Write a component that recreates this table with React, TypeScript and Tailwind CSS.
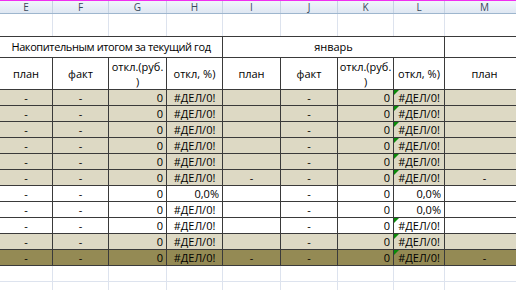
import React from "react";

const COLS = "grid grid-cols-[53px_56px_58px_56px_58px_57px_56px_51px_80px]";
const ERR = "#ДЕЛ/0!";

type Row = {
  bg: string;
  i: string;
  h: string;
  l: string;
  tri: boolean;
  m: string;
};

const TAN = "bg-[#ddd9c4]";
const WHITE = "bg-white";
const OLIVE = "bg-[#948a54]";

const rows: Row[] = [
  { bg: TAN, i: "", h: ERR, l: ERR, tri: true, m: "" },
  { bg: TAN, i: "", h: ERR, l: ERR, tri: true, m: "" },
  { bg: TAN, i: "", h: ERR, l: ERR, tri: true, m: "" },
  { bg: TAN, i: "", h: ERR, l: ERR, tri: true, m: "" },
  { bg: TAN, i: "", h: ERR, l: ERR, tri: true, m: "" },
  { bg: TAN, i: "-", h: ERR, l: ERR, tri: true, m: "-" },
  { bg: WHITE, i: "", h: "0,0%", l: "0,0%", tri: false, m: "" },
  { bg: WHITE, i: "", h: ERR, l: "0,0%", tri: false, m: "" },
  { bg: WHITE, i: "", h: ERR, l: ERR, tri: true, m: "" },
  { bg: TAN, i: "", h: ERR, l: ERR, tri: true, m: "" },
  { bg: OLIVE, i: "-", h: ERR, l: ERR, tri: true, m: "-" },
];

const cell = "border-r border-b border-[#3a3a3a] h-[16px] flex items-center overflow-hidden whitespace-nowrap";

function Tri() {
  return (
    <span className="absolute left-0 top-0 w-0 h-0 border-t-[5px] border-r-[5px] border-t-[#0a8a0a] border-r-transparent" />
  );
}

function ValueCell({ v, tri }: { v: string; tri?: boolean }) {
  const isErr = v === ERR;
  return (
    <div className={`${cell} relative ${isErr ? "justify-center" : "justify-end pr-[3px]"}`}>
      {tri ? <Tri /> : null}
      {v}
    </div>
  );
}

export default function App() {
  const letters = ["E", "F", "G", "H", "I", "J", "K", "L", "M"];
  return (
    <div
      className="w-[516px] h-[290px] overflow-hidden bg-white text-black"
      style={{ fontFamily: '"Open Sans", "Noto Sans", sans-serif' }}
    >
      <div className="w-[525px]">
        {/* magenta line */}
        <div className="h-[1px] bg-[#f02ef0]" />
        {/* column headers */}
        <div className={`${COLS} h-[13px] bg-gradient-to-b from-[#f1f5fb] to-[#dfe7f2] border-b border-[#9eb6ce]`}>
          {letters.map((c) => (
            <div
              key={c}
              className="border-r border-[#c5d3e3] flex items-center justify-center text-[10px] leading-none text-[#3b4a5c]"
            >
              {c}
            </div>
          ))}
        </div>
        {/* blank row */}
        <div className={`${COLS} h-[22px]`}>
          {letters.map((c) => (
            <div key={c} className="border-r border-[#dde3ee]" />
          ))}
        </div>
        {/* title row */}
        <div className={`${COLS} h-[22px] border-t border-[#3a3a3a] text-[11px]`}>
          <div className="col-span-4 border-r border-b border-[#3a3a3a] flex items-center justify-center whitespace-nowrap tracking-[-0.4px] pt-[1px]">
            Накопительным итогом за текущий год
          </div>
          <div className="col-span-4 border-r border-b border-[#3a3a3a] flex items-center justify-center pt-[1px]">
            январь
          </div>
          <div className="border-r border-b border-[#3a3a3a]" />
        </div>
        {/* header row */}
        <div className={`${COLS} h-[32px] text-[11px] leading-[15px]`}>
          {["план", "факт", "откл.(руб. )", "откл, %)", "план", "факт", "откл.(руб. )", "откл, %)", "план"].map(
            (t, idx) => (
              <div
                key={idx}
                className="border-r border-b border-[#3a3a3a] flex items-center justify-center text-center px-[1px] overflow-hidden"
              >
                {t === "откл.(руб. )" ? (
                  <span>
                    откл.(руб.
                    <br />)
                  </span>
                ) : (
                  t
                )}
              </div>
            )
          )}
        </div>
        {/* data rows */}
        {rows.map((r, idx) => (
          <div key={idx} className={`${COLS} ${r.bg} text-[11px] leading-none`}>
            <div className={`${cell} justify-center`}>-</div>
            <div className={`${cell} justify-center`}>-</div>
            <ValueCell v="0" />
            <ValueCell v={r.h} />
            <div className={`${cell} justify-center`}>{r.i}</div>
            <div className={`${cell} justify-center`}>-</div>
            <ValueCell v="0" />
            <ValueCell v={r.l} tri={r.tri} />
            <div className={`${cell} justify-center`}>{r.m}</div>
          </div>
        ))}
        {/* empty rows below */}
        {[0, 1].map((k) => (
          <div key={k} className={`${COLS} h-[16px]`}>
            {letters.map((c) => (
              <div key={c} className="border-r border-b border-[#dde3ee]" />
            ))}
          </div>
        ))}
      </div>
    </div>
  );
}
